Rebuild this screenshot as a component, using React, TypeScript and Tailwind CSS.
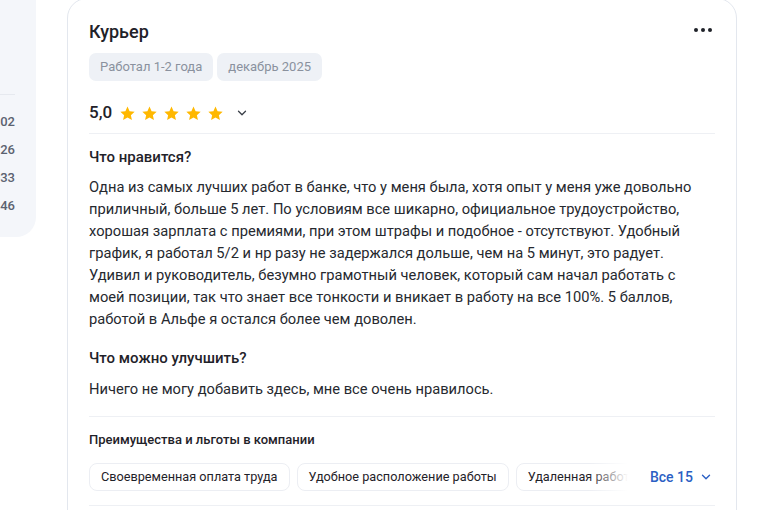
import { ChevronDown } from "lucide-react";

const Star = () => (
  <svg width="17" height="17" viewBox="0 0 24 24" className="shrink-0">
    <path
      d="M12 2.2l2.95 6.55 7.15.75-5.35 4.8 1.5 7.05L12 17.75 5.75 21.35l1.5-7.05L1.9 9.5l7.15-.75z"
      fill="#ffb800"
    />
  </svg>
);

const tags = ["Работал 1-2 года", "декабрь 2025"];
const perks = [
  "Своевременная оплата труда",
  "Удобное расположение работы",
  "Удаленная работа",
];
const sideNumbers = ["1 202", "1 126", "1 033", "2 346"];

export default function App() {
  return (
    <div className="flex w-[768px] h-[510px] overflow-hidden bg-white font-['Roboto',sans-serif] text-[#1f2229]">
      {/* Обрезанная боковая панель слева */}
      <div className="w-[36px] h-[237px] shrink-0 overflow-hidden rounded-br-[20px] bg-[#f4f6fa]">
        <div className="flex flex-col items-end pr-[21px] pt-[94px] w-[36px]">
          <div className="w-[60px] h-px bg-[#e6e9ef]" />
          <ul className="flex flex-col gap-[8px] mt-[17px] text-[13px] font-medium text-[#5b6270] leading-[20px]">
            {sideNumbers.map((n) => (
              <li key={n} className="whitespace-nowrap text-right">
                {n}
              </li>
            ))}
          </ul>
        </div>
      </div>

      {/* Карточка отзыва */}
      <div className="ml-[31px] -mt-[2px] w-[670px] shrink-0 self-start rounded-[20px] border border-[#e3e7ee] px-[21px] pt-[21px] pb-[40px]">
        <div className="flex items-center justify-between">
          <h2 className="text-[18px] leading-[24px] font-medium">Курьер</h2>
          <div className="flex gap-[3px] mr-[3px] mb-[4px]">
            <span className="w-[4px] h-[4px] rounded-full bg-[#1f2229]" />
            <span className="w-[4px] h-[4px] rounded-full bg-[#1f2229]" />
            <span className="w-[4px] h-[4px] rounded-full bg-[#1f2229]" />
          </div>
        </div>

        <div className="flex gap-[4px] mt-[9px]">
          {tags.map((t) => (
            <span
              key={t}
              className="h-[28px] flex items-center px-[11px] rounded-[7px] bg-[#eef1f6] text-[13px] text-[#8a919e]"
            >
              {t}
            </span>
          ))}
        </div>

        <div className="flex items-center h-[24px] mt-[20px]">
          <span className="text-[17px] font-medium mr-[7px]">5,0</span>
          <div className="flex gap-[5px]">
            {Array.from({ length: 5 }).map((_, i) => (
              <Star key={`star-${i}`} />
            ))}
          </div>
          <ChevronDown size={14} strokeWidth={2.2} className="ml-[11px] text-[#3a3f48]" />
        </div>

        <div className="h-px bg-[#eef0f4] mt-[8px]" />

        <h3 className="mt-[12px] text-[15px] leading-[22px] font-medium">Что нравится?</h3>
        <p className="mt-[8px] max-w-[610px] text-[14.7px] leading-[22px] text-[#26292f]">
          Одна из самых лучших работ в банке, что у меня была, хотя опыт у меня уже довольно
          приличный, больше 5 лет. По условиям все шикарно, официальное трудоустройство,
          хорошая зарплата с премиями, при этом штрафы и подобное - отсутствуют. Удобный
          график, я работал 5/2 и нр разу не задержался дольше, чем на 5 минут, это радует.
          Удивил и руководитель, безумно грамотный человек, который сам начал работать с
          моей позиции, так что знает все тонкости и вникает в работу на все 100%. 5 баллов,
          работой в Альфе я остался более чем доволен.
        </p>

        <h3 className="mt-[17px] text-[15px] leading-[22px] font-medium">Что можно улучшить?</h3>
        <p className="mt-[9px] text-[14.7px] leading-[22px] text-[#26292f]">
          Ничего не могу добавить здесь, мне все очень нравилось.
        </p>

        <div className="h-px bg-[#eef0f4] mt-[16px]" />

        <h4 className="mt-[13px] text-[13px] leading-[20px] font-medium">
          Преимущества и льготы в компании
        </h4>

        <div className="flex items-center mt-[13px]">
          <div className="relative flex-1 overflow-hidden">
            <ul className="flex gap-[7px]">
              {perks.map((p) => (
                <li
                  key={p}
                  className="h-[28px] flex items-center px-[11px] rounded-[8px] border border-[#eceef3] text-[12.7px] whitespace-nowrap"
                >
                  {p}
                </li>
              ))}
            </ul>
            <div className="absolute right-0 top-0 h-full w-[40px] bg-gradient-to-r from-white/0 to-white" />
          </div>
          <button className="flex items-center gap-[6px] ml-[22px] mr-[2px] text-[14px] font-medium text-[#2b5fc4]">
            Все 15
            <ChevronDown size={14} strokeWidth={2.4} />
          </button>
        </div>

        <div className="h-px bg-[#eef0f4] mt-[14px]" />
      </div>
    </div>
  );
}
